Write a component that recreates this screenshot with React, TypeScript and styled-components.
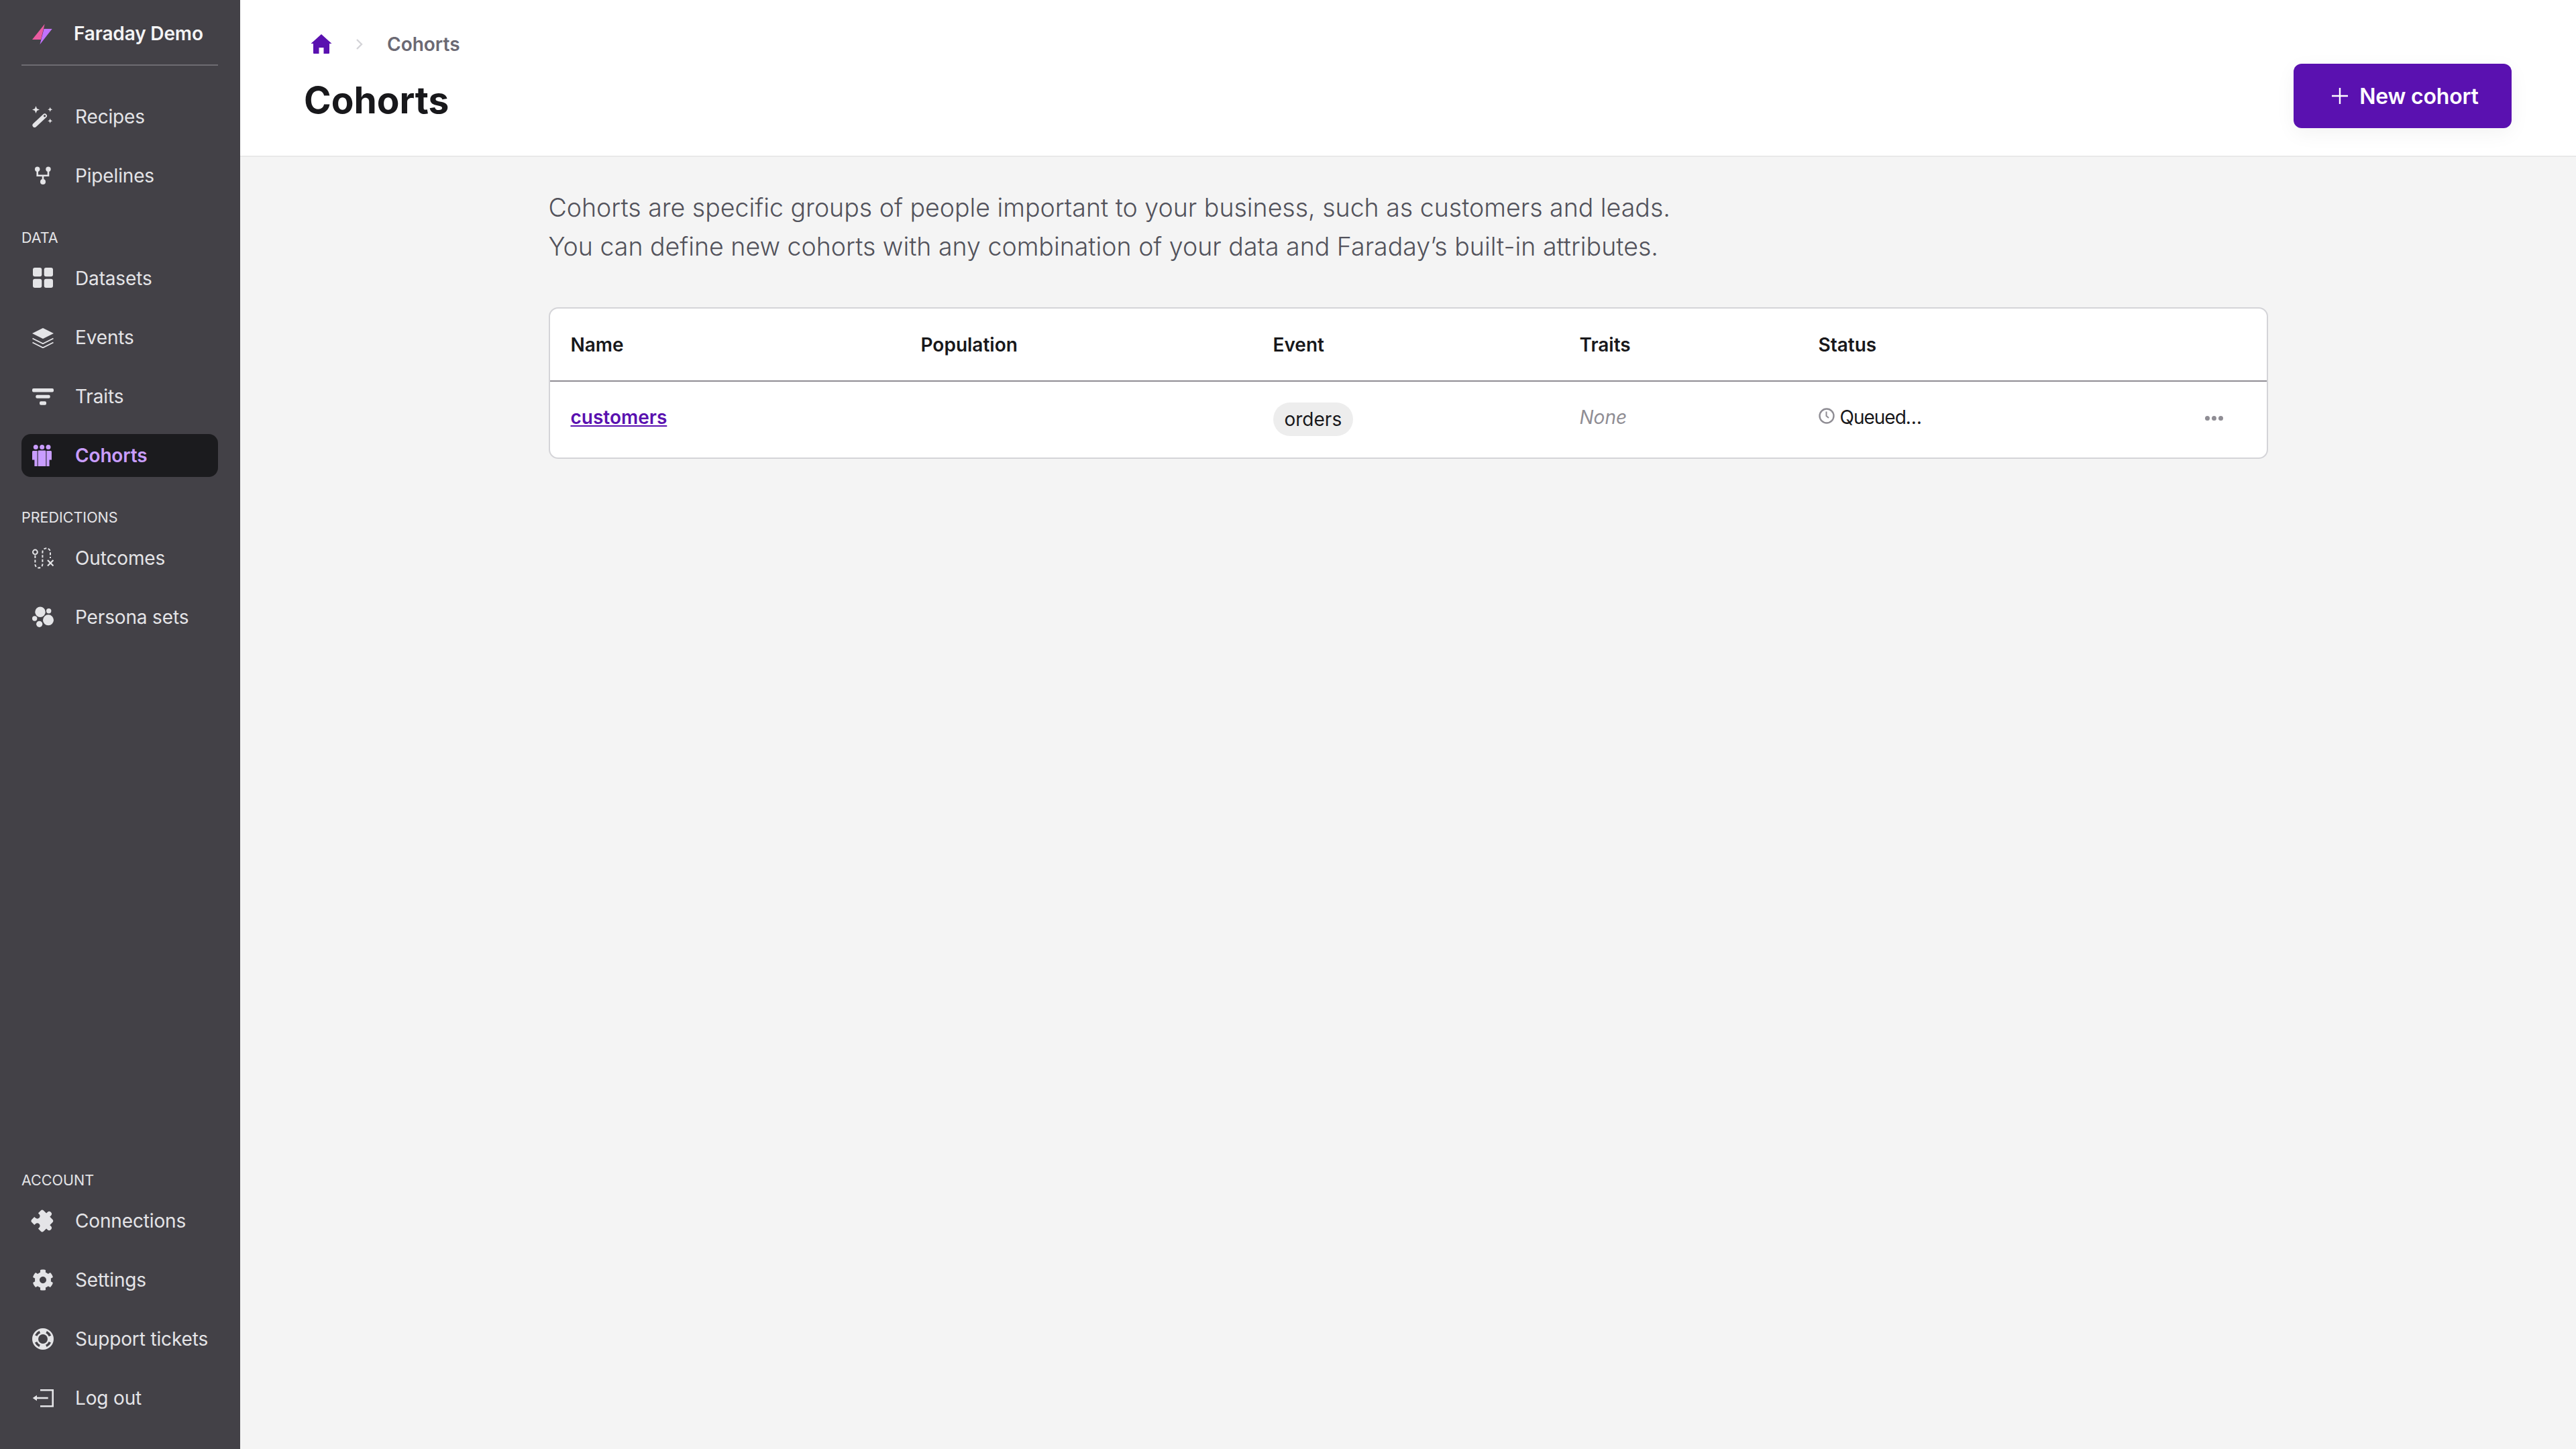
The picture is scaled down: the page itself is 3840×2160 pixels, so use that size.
import React from 'react';
import styled, { createGlobalStyle } from 'styled-components';
import { FaCog } from 'react-icons/fa';
import { MdExtension } from 'react-icons/md';

const GlobalStyle = createGlobalStyle`
    html, body {
        margin: 0;
        padding: 0;
    }

    body {
        font-family: "Inter", "Liberation Sans", sans-serif;
        background: #f4f4f4;
    }
`;

const Page = styled.div`
    display: flex;
    width: 100%;
    height: 100vh;
`;

const Sidebar = styled.nav`
    width: 358px;
    flex-shrink: 0;
    padding: 0 33px 44px 32px;
    box-sizing: border-box;
    background: #434147;
    display: flex;
    flex-direction: column;
`;

const Account = styled.div`
    height: 98px;
    box-sizing: border-box;
    padding: 4px 16px 0 16px;
    border-bottom: 2px solid #6e6c72;
    margin-bottom: 44px;
    display: flex;
    align-items: center;
    gap: 30px;
    font-size: 28px;
    font-weight: 600;
    letter-spacing: -0.15px;
    color: #f4f4f5;
`;

const NavGroup = styled.div<{ $bottom?: boolean }>`
    display: flex;
    flex-direction: column;
    gap: 24px;
    margin-top: ${props => (props.$bottom ? 'auto' : '0')};
`;

const SectionLabel = styled.div`
    height: 30px;
    line-height: 30px;
    margin-top: 21px;
    margin-bottom: -10px;
    font-size: 21.5px;
    color: #e4e4e7;
    text-transform: uppercase;
`;

const NavRow = styled.a<{ $active?: boolean }>`
    height: 64px;
    padding-left: 16px;
    display: flex;
    align-items: center;
    gap: 32px;
    border-radius: 14px;
    font-size: 28px;
    letter-spacing: -0.15px;
    font-weight: ${props => (props.$active ? 600 : 400)};
    color: ${props => (props.$active ? '#c99dff' : '#e4e4e7')};
    background: ${props => (props.$active ? '#1b1b1e' : 'transparent')};

    svg {
        width: 32px;
        height: 32px;
        flex-shrink: 0;
    }
`;

const PuzzleIcon = styled(MdExtension)`
    transform: translateX(2px) rotate(45deg) scale(1.1);
`;

const Main = styled.main`
    flex: 1;
    min-width: 0;
    display: flex;
    flex-direction: column;
`;

const Header = styled.header`
    height: 234px;
    box-sizing: border-box;
    padding: 0 96px 0 95px;
    background: #fff;
    border-bottom: 2px solid #e8e8e8;
    display: flex;
    justify-content: space-between;
    align-items: flex-start;
`;

const Breadcrumb = styled.div`
    height: 34px;
    margin-top: 49px;
    padding-left: 10px;
    display: flex;
    align-items: center;
    gap: 35px;
    font-size: 28px;
    font-weight: 600;
    color: #6b6973;
`;

const Title = styled.h1`
    margin: 32px 0 0;
    font-size: 55px;
    line-height: 68px;
    font-weight: 700;
    color: #18181b;
`;

const NewButton = styled.button`
    width: 325px;
    height: 96px;
    margin-top: 95px;
    padding: 0 0 0 8px;
    border: none;
    border-radius: 12px;
    background: #5a11b0;
    color: #fff;
    box-shadow: 0 8px 30px rgba(0, 0, 0, 0.05);
    display: flex;
    align-items: center;
    justify-content: center;
    gap: 17px;
    font-family: inherit;
    font-size: 32px;
    font-weight: 600;
    letter-spacing: -0.2px;
`;

const Content = styled.div`
    width: 2563px;
    margin: 0 auto;
`;

const Intro = styled.p`
    margin: 47px 0 61px;
    font-size: 37.5px;
    line-height: 58px;
    font-weight: 300;
    color: #52525b;
`;

const Card = styled.div`
    border: 2px solid #d4d4d8;
    border-radius: 14px;
    background: #fff;
`;

const TableRow = styled.div<{ $head?: boolean }>`
    display: grid;
    grid-template-columns: 522px 525px 457px 356px 1fr 100px;
    align-items: center;
    padding-left: 31px;
    padding-bottom: ${props => (props.$head ? '0' : '8px')};
    box-sizing: border-box;
    height: ${props => (props.$head ? '109px' : '113px')};
    border-bottom: ${props => (props.$head ? '2px solid #8f8d94' : 'none')};
    font-size: 28px;
    font-weight: ${props => (props.$head ? 600 : 400)};
    color: #18181b;
`;

const CohortLink = styled.a`
    color: #5a11b0;
    font-weight: 600;
    text-decoration: underline;
`;

const Pill = styled.span`
    display: inline-flex;
    align-items: center;
    height: 50px;
    padding: 0 17px;
    margin-top: 6px;
    border-radius: 25px;
    background: #ededed;
`;

const NoTraits = styled.span`
    font-style: italic;
    color: #8f8d94;
`;

const Status = styled.span`
    display: flex;
    align-items: center;
    gap: 8px;
    letter-spacing: -1px;

    svg {
        margin-top: -3px;
    }
`;

const MoreDots = styled.span`
    display: flex;
    gap: 3px;
    margin-top: 4px;
    padding-left: 8px;

    i {
        width: 7px;
        height: 7px;
        border-radius: 50%;
        background: #8f8d94;
    }
`;

function Logo() {
    return (
        <svg width="32" height="33" viewBox="0 0 32 33">
            <path d="M0 25 18.7 1.7 13 25z" fill="#ea5ba0" />
            <path d="M29.7 9H17.5l-6 23.3z" fill="#c272ff" />
        </svg>
    );
}

function WandIcon() {
    return (
        <svg viewBox="0 0 32 32" fill="currentColor">
            <path d="M5.5 0l1.6 3.9 3.9 1.6-3.9 1.6L5.5 11 3.9 7.1 0 5.5l3.9-1.6z" />
            <path d="M26.7 1.8l1 2.5 2.5 1-2.5 1-1 2.5-1-2.5-2.5-1 2.5-1z" />
            <path d="M26.7 18.8l1 2.5 2.5 1-2.5 1-1 2.5-1-2.5-2.5-1 2.5-1z" />
            <path d="M3.7 28.7 18.7 14.7" stroke="currentColor" strokeWidth="6.5" strokeLinecap="round" />
            <circle cx="18.6" cy="14.8" r="1.6" fill="#434147" />
        </svg>
    );
}

function PipelinesIcon() {
    return (
        <svg viewBox="0 0 32 32" fill="currentColor">
            <circle cx="7.7" cy="6.3" r="3.7" />
            <circle cx="24" cy="6.3" r="3.7" />
            <circle cx="16" cy="25" r="4" />
            <path d="M7.7 6v9.7h16.3V6M16 15.7V24" fill="none" stroke="currentColor" strokeWidth="2.6" />
        </svg>
    );
}

function DatasetsIcon() {
    return (
        <svg viewBox="0 0 32 32" fill="currentColor">
            <rect x="1" y="0" width="13.3" height="13.3" rx="3" />
            <rect x="17.7" y="0" width="13.3" height="13.3" rx="3" />
            <rect x="1" y="16.7" width="13.3" height="13.3" rx="3" />
            <rect x="17.7" y="16.7" width="13.3" height="13.3" rx="3" />
        </svg>
    );
}

function LayersIcon() {
    return (
        <svg viewBox="0 0 32 32" fill="currentColor">
            <path d="M16 2l16 8-16 8L0 10z" />
            <path d="M.5 17.5 16 25.3l15.5-7.8M.5 23.5 16 31.3l15.5-7.8" fill="none" stroke="currentColor" strokeWidth="1.8" />
        </svg>
    );
}

function TraitsIcon() {
    return (
        <svg viewBox="0 0 32 32" fill="currentColor">
            <rect x="0" y="4" width="32" height="5.4" rx="2" />
            <rect x="5.3" y="13.7" width="21.4" height="5" rx="2" />
            <rect x="11" y="23.3" width="10" height="5.4" rx="2" />
        </svg>
    );
}

function CohortsIcon() {
    return (
        <svg viewBox="0 0 32 32" fill="currentColor">
            <circle cx="5.3" cy="3.5" r="3.5" />
            <circle cx="14.7" cy="3.5" r="3.5" />
            <circle cx="24" cy="3.5" r="3.5" />
            <path d="M1.6 9h6v23H3.4V22.5H0V10.6C0 9.7.7 9 1.6 9z" />
            <path d="M27.4 9h-6v23h4.2V22.5H29V10.6C29 9.7 28.3 9 27.4 9z" />
            <path d="M10 8.6h9c.8 0 1.4.6 1.4 1.4V32H8.6V10c0-.8.6-1.4 1.4-1.4z" />
        </svg>
    );
}

function OutcomesIcon() {
    return (
        <svg viewBox="0 0 32 32" fill="none" stroke="currentColor" strokeWidth="2">
            <circle cx="4.4" cy="7" r="3.4" />
            <path d="M4.4 12v13a5.4 5.4 0 0 0 11 0V7a5.8 5.8 0 0 1 11.6 0v9" strokeDasharray="4 2.6" />
            <path d="M23 19l8.5 8.5M31.5 19 23 27.5" strokeWidth="2.2" />
        </svg>
    );
}

function PersonaIcon() {
    return (
        <svg viewBox="0 0 32 32" fill="currentColor">
            <circle cx="12" cy="8.3" r="7.7" />
            <circle cx="24.7" cy="6.7" r="3.7" />
            <circle cx="24" cy="20.3" r="8" />
            <circle cx="3.7" cy="18" r="3.7" />
            <circle cx="10.7" cy="26.3" r="4.6" />
        </svg>
    );
}

function LifeRingIcon() {
    return (
        <svg viewBox="0 0 32 32">
            <circle cx="16" cy="16" r="11.5" fill="none" stroke="currentColor" strokeWidth="9" />
            <circle
                cx="16"
                cy="16"
                r="11.5"
                fill="none"
                stroke="#434147"
                strokeWidth="3.6"
                strokeDasharray="8 10.06"
                transform="rotate(25 16 16)"
            />
        </svg>
    );
}

function LogoutIcon() {
    return (
        <svg viewBox="0 0 32 32" fill="currentColor">
            <path d="M12 4.2h18.7v24H12" fill="none" stroke="currentColor" strokeWidth="2.6" />
            <path d="M.7 16 7 11.8v8.4z" />
            <path d="M6 16h17.7" stroke="currentColor" strokeWidth="2.6" />
        </svg>
    );
}

function HomeIcon() {
    return (
        <svg width="32" height="32" viewBox="0 0 32 32" fill="#5a11b0">
            <path d="M16 1 31.5 15H28v14a1 1 0 0 1-1 1h-7.5v-9h-7v9H5a1 1 0 0 1-1-1V15H.5z" />
        </svg>
    );
}

function ChevronIcon() {
    return (
        <svg width="12" height="18" viewBox="0 0 12 18" fill="none" stroke="#d4d4d8" strokeWidth="2.4">
            <path d="M2 2l7 7-7 7" />
        </svg>
    );
}

function PlusIcon() {
    return (
        <svg width="24" height="24" viewBox="0 0 24 24" stroke="#fff" strokeWidth="2.4">
            <path d="M12 0v24M0 12h24" />
        </svg>
    );
}

function ClockIcon() {
    return (
        <svg width="24" height="24" viewBox="0 0 24 24" fill="none" stroke="#8f8d94" strokeWidth="2.4">
            <circle cx="12" cy="12" r="10.5" />
            <path d="M11.5 5.5V12l3.5 3" strokeWidth="2" />
        </svg>
    );
}

function App() {
    return (
        <>
            <GlobalStyle />
            <Page>
                <Sidebar>
                    <Account>
                        <Logo />
                        Faraday Demo
                    </Account>
                    <NavGroup>
                        <NavRow><WandIcon />Recipes</NavRow>
                        <NavRow><PipelinesIcon />Pipelines</NavRow>
                        <SectionLabel>Data</SectionLabel>
                        <NavRow><DatasetsIcon />Datasets</NavRow>
                        <NavRow><LayersIcon />Events</NavRow>
                        <NavRow><TraitsIcon />Traits</NavRow>
                        <NavRow $active><CohortsIcon />Cohorts</NavRow>
                        <SectionLabel>Predictions</SectionLabel>
                        <NavRow><OutcomesIcon />Outcomes</NavRow>
                        <NavRow><PersonaIcon />Persona sets</NavRow>
                    </NavGroup>
                    <NavGroup $bottom>
                        <SectionLabel>Account</SectionLabel>
                        <NavRow><PuzzleIcon />Connections</NavRow>
                        <NavRow><FaCog />Settings</NavRow>
                        <NavRow><LifeRingIcon />Support tickets</NavRow>
                        <NavRow><LogoutIcon />Log out</NavRow>
                    </NavGroup>
                </Sidebar>
                <Main>
                    <Header>
                        <div>
                            <Breadcrumb>
                                <HomeIcon />
                                <ChevronIcon />
                                Cohorts
                            </Breadcrumb>
                            <Title>Cohorts</Title>
                        </div>
                        <NewButton>
                            <PlusIcon />
                            New cohort
                        </NewButton>
                    </Header>
                    <Content>
                        <Intro>
                            Cohorts are specific groups of people important to your business, such as customers and leads.
                            <br />
                            You can define new cohorts with any combination of your data and Faraday’s built-in attributes.
                        </Intro>
                        <Card>
                            <TableRow $head>
                                <span>Name</span>
                                <span>Population</span>
                                <span>Event</span>
                                <span>Traits</span>
                                <span>Status</span>
                            </TableRow>
                            <TableRow>
                                <CohortLink>customers</CohortLink>
                                <span />
                                <span><Pill>orders</Pill></span>
                                <NoTraits>None</NoTraits>
                                <Status><ClockIcon />Queued…</Status>
                                <MoreDots><i /><i /><i /></MoreDots>
                            </TableRow>
                        </Card>
                    </Content>
                </Main>
            </Page>
        </>
    );
}

export default App;
